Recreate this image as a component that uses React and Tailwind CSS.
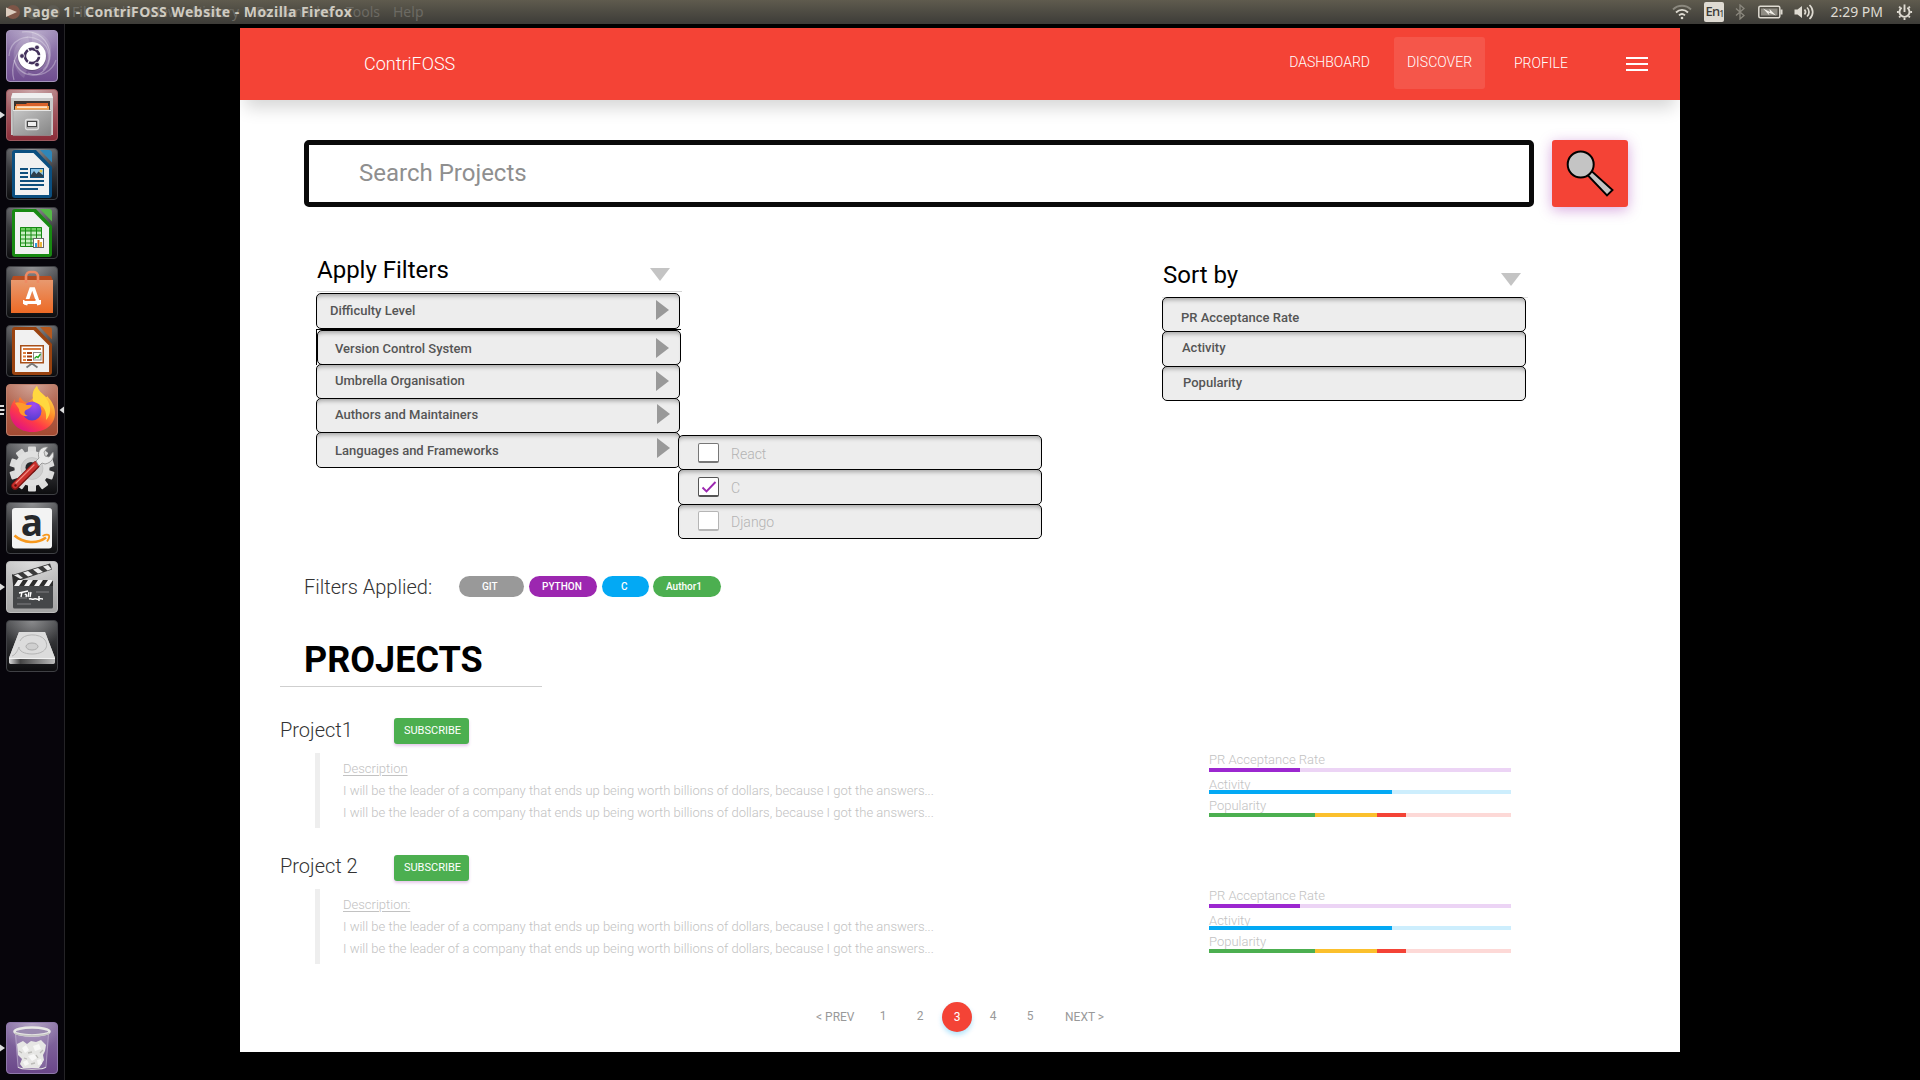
import React from "react";

/* ---------- launcher icons ---------- */

function Tile({ id, from, to, stroke, children }) {
  return (
    <svg viewBox="0 0 52 52" className="block size-[52px]">
      <defs>
        <linearGradient id={id} x1="0" y1="0" x2="0" y2="1">
          <stop offset="0" stopColor={from} />
          <stop offset="1" stopColor={to} />
        </linearGradient>
        <radialGradient id={id + "-glow"} cx="0.5" cy="0" r="0.6">
          <stop offset="0" stopColor="#fff" stopOpacity="0.35" />
          <stop offset="1" stopColor="#fff" stopOpacity="0" />
        </radialGradient>
      </defs>
      <rect x="0.5" y="0.5" width="51" height="51" rx="3.5" fill={`url(#${id})`} stroke={stroke} />
      <rect x="1" y="1" width="50" height="50" rx="3" fill={`url(#${id}-glow)`} />
      {children}
    </svg>
  );
}

function UbuntuIcon() {
  return (
    <Tile id="ubuntu" from="#9a86b4" to="#6f4d8f" stroke="#a796bd">
      <g fill="none" stroke="#fff">
        <path d="M3 26C4 10 20 3 33 10c12 7 13 22 4 30" strokeOpacity=".3" strokeWidth="1.2" />
        <path d="M8 50C4 36 10 20 22 15" strokeOpacity=".35" strokeWidth="1.2" />
        <path d="M16 2c16-2 27 8 28 23 0 12-8 21-19 20-9-1-14-6-17-15" strokeOpacity=".35" strokeWidth="1.2" />
        <path d="M50 30C46 42 34 48 22 43" strokeOpacity=".3" strokeWidth="1.2" />
      </g>
      <path d="M26 2c16 1 22 13 18 26-3 10-10 14-18 12z" fill="#fff" opacity=".13" />
      <path d="M8 30c-2-12 4-20 14-24L26 26 18 48C12 44 9 38 8 30z" fill="#fff" opacity=".13" />
      <circle cx="26" cy="26.5" r="14.5" fill="#000" opacity=".2" />
      <circle cx="26" cy="26" r="14" fill="#fff" />
      <circle cx="26" cy="26" r="7" fill="none" stroke="#43315c" strokeWidth="2.8" />
      <path d="M26 26L35 26M26 26L21.5 18.2M26 26L21.5 33.8" stroke="#fff" strokeWidth="1.3" />
      <circle cx="26" cy="26" r="5.6" fill="#fff" />
      {[[16, 26], [31, 17.4], [31, 34.6]].map(([x, y]) => (
        <circle key={y} cx={x} cy={y} r="2.4" fill="#43315c" stroke="#fff" strokeWidth=".8" />
      ))}
    </Tile>
  );
}

function FilesIcon() {
  return (
    <Tile id="files" from="#b0787c" to="#8b2c38" stroke="#9e5a60">
      <defs>
        <linearGradient id="drawer" x1="0" y1="0" x2="1" y2="1">
          <stop offset="0" stopColor="#c6c6c6" />
          <stop offset="1" stopColor="#858585" />
        </linearGradient>
      </defs>
      <path d="M6.500 4h39l1.500 5v37H5V9z" fill="#c9c9c9" />
      <path d="M6.500 4h39l1.500 5H5z" fill="#efefef" />
      <rect x="8" y="12" width="36" height="10" fill="#3a3330" />
      <path d="M10 15h10l1-1h21v7H10z" fill="#d9622b" />
      <path d="M9 17h34v4H9z" fill="#f5a04c" />
      <path d="M11 17.500h30v1.200H11z" fill="#fff" />
      <path d="M7 21h38v25.500H7z" fill="url(#drawer)" stroke="#9b9b9b" strokeWidth=".6" />
      <path d="M7 21.500h38" stroke="#e6e6e6" />
      <rect x="19.500" y="30.500" width="13" height="10" rx="2" fill="#a9a9a9" stroke="#dedede" strokeWidth="1.300" />
      <rect x="21.500" y="32.500" width="9" height="5" fill="#eee" stroke="#444" strokeWidth="1" />
    </Tile>
  );
}

function OfficeIcon({ id, color, light, children }) {
  return (
    <Tile id={id} from="#55565a" to="#0c0c0e" stroke="#3f4044">
      <path d="M9 2h21l16 17v28a3 3 0 0 1-3 3H9a3 3 0 0 1-3-3V5a3 3 0 0 1 3-3z" fill={color} />
      <path d="M9 5h18.500L43 20.500V47H9z" fill="#f1f1f1" />
      <path d="M34 2h9a3 3 0 0 1 3 3v9.500z" fill={light} />
      {children}
    </Tile>
  );
}

function WriterIcon() {
  return (
    <OfficeIcon id="writer" color="#0b4f80" light="#2f86b8">
      <g fill="#0f4f7d">
        <rect x="14" y="20" width="8" height="2" />
        <rect x="14" y="24" width="8" height="2" />
        <rect x="14" y="28" width="8" height="2" />
        <rect x="14" y="32" width="24" height="2" />
        <rect x="14" y="36" width="24" height="2" />
        <rect x="14" y="40" width="18" height="2" />
      </g>
      <rect x="24.500" y="20.500" width="13" height="9" fill="#8cc4e8" stroke="#0f4f7d" />
      <path d="M25 29v-2l3-4 2.500 3 2-2.500L37 27v2z" fill="#2c3e4c" />
      <circle cx="35" cy="23" r="1.500" fill="#e8c547" />
    </OfficeIcon>
  );
}

function CalcIcon() {
  return (
    <OfficeIcon id="calc" color="#188a12" light="#55b848">
      <rect x="14" y="20" width="22" height="20" fill="#c9efc2" />
      <rect x="14" y="20" width="22" height="4" fill="#6fcf63" />
      <path d="M14.500 20.500h21v19h-21zM14 24h22M14 28h22M14 32h22M14 36h22M19.500 20v20M25 20v20M30.500 20v20" fill="none" stroke="#168a12" />
      <rect x="27.500" y="31.500" width="10" height="9" fill="#fff" stroke="#666" />
      <path d="M29 36h2v4h-2z" fill="#2e9be0" />
      <path d="M31.500 33h2v7h-2z" fill="#e06a1c" />
      <path d="M34 35h2v5h-2z" fill="#e9b63a" />
    </OfficeIcon>
  );
}

function ImpressIcon() {
  return (
    <OfficeIcon id="impress" color="#9a4310" light="#b5591f">
      <rect x="14.750" y="20.750" width="22.500" height="17" fill="#fff" stroke="#a8501a" strokeWidth="1.500" />
      <rect x="17" y="23" width="18" height="2" fill="#d77a3d" />
      <path d="M17 27h3v2h-3zM17 30.500h3v2h-3zM17 34h3v2h-3z" fill="#e07f3c" />
      <path d="M21 27h5v2h-5zM21 30.500h5v2h-5zM21 34h5v2h-5z" fill="#a03f12" />
      <rect x="27.500" y="27.500" width="7.500" height="7.500" fill="#fff" stroke="#888" />
      <path d="M28.500 33.500l2-2 1.500 1 2.500-3.500" fill="none" stroke="#1ca51c" strokeWidth="1.300" />
      <path d="M26 38v2M26 38.500l-5.500 4M26 38.500l5.500 4" stroke="#777" strokeWidth="1.800" />
    </OfficeIcon>
  );
}

function SoftwareIcon() {
  return (
    <Tile id="software" from="#57585c" to="#0c0c0e" stroke="#3f4044">
      <defs>
        <linearGradient id="bag" x1="0" y1="0" x2="0" y2="1">
          <stop offset="0" stopColor="#e8996f" />
          <stop offset="1" stopColor="#ed6a25" />
        </linearGradient>
      </defs>
      <path d="M7 10h38l2 5H5z" fill="#b54b1f" />
      <path d="M5 14h42v33H5z" fill="url(#bag)" />
      <path d="M20 17v-6c0-3 2-5 4-5h4c2 0 4 2 4 5v6" fill="none" stroke="#ef8a63" strokeWidth="2.600" />
      <path d="M19.500 39L25 23h2.500L33 39" fill="none" stroke="#fff" strokeWidth="3.600" />
      <path d="M17 34h18v4H17z" fill="#fff" />
      <path d="M18.500 34h11" stroke="#ee6a25" strokeWidth="1.800" />
    </Tile>
  );
}

function FirefoxIcon() {
  return (
    <Tile id="firefox" from="#b9735f" to="#a34a32" stroke="#bd7f6c">
      <defs>
        <linearGradient id="flame" x1="0.8" y1="0.1" x2="0.25" y2="0.95">
          <stop offset="0" stopColor="#ffe14a" />
          <stop offset=".4" stopColor="#ff8a2a" />
          <stop offset=".7" stopColor="#ff3b47" />
          <stop offset="1" stopColor="#e3157e" />
        </linearGradient>
        <radialGradient id="globe" cx="0.6" cy="0.2" r="0.9">
          <stop offset="0" stopColor="#a34df0" />
          <stop offset="1" stopColor="#4b3bd0" />
        </radialGradient>
      </defs>
      <path d="M31 2c1 5 5 7 9 11 1 0 1 0 1-1 5 5 8 11 8 17 0 12-10 19-23 19S4 39 4 28c0-5 2-9 5-13 0 2 0 3 1 4 1-1 2-1 3-1-1-2 0-3 1-5 2 3 4 5 7 6 2-2 5-3 6-5-1-5 1-9 4-12z" fill="url(#flame)" />
      <circle cx="26" cy="27" r="9.500" fill="url(#globe)" />
      <path d="M31 2c1 5 6 8 9 12 6 8 5 17 0 22 1-9-2-14-9-17-4-1-5-3-4-5-1-5 1-9 4-12z" fill="#ffd83f" />
      <path d="M9 19c4-1 9 0 12 2h5c-1 3-4 4-6 5-3 2-1 5 2 6-6 1-9-3-9-7z" fill="#ff9a2c" />
    </Tile>
  );
}

function SettingsIcon() {
  const teeth = [0, 36, 72, 108, 144, 180, 216, 252, 288, 324];
  return (
    <Tile id="settings" from="#57585c" to="#0c0c0e" stroke="#3f4044">
      {teeth.map((a) => (
        <rect key={a} x="22" y="3.500" width="8" height="10" rx="1" fill="#dcdcdc" transform={`rotate(${a} 26 26)`} />
      ))}
      <circle cx="26" cy="25.500" r="17.500" fill="#e0e0e0" />
      <circle cx="26" cy="25.500" r="11" fill="#cfcfcf" stroke="#bbb" strokeWidth=".6" />
      <circle cx="25" cy="24.500" r="5.500" fill="#26272a" />
      <path d="M9 43L30 22" stroke="#7b1513" strokeWidth="7.500" strokeLinecap="round" />
      <path d="M9 42.500L30 21.500" stroke="#c92f2b" strokeWidth="5.500" strokeLinecap="round" />
      <path d="M10 40L28 22" stroke="#f08a80" strokeWidth="1.200" strokeLinecap="round" />
      <path d="M30 18l3-3c-2-5 1-10 6-11h3l-4 5 1 4 4 1 4-5c2 6-2 11-8 12l-3-1-3 3z" fill="#e9e9e9" stroke="#8b8b8b" strokeWidth=".8" />
      <circle cx="9.500" cy="42.500" r="1.200" fill="#5c0e0d" />
    </Tile>
  );
}

function AmazonIcon() {
  return (
    <Tile id="amazon" from="#57585c" to="#0c0c0e" stroke="#3f4044">
      <rect x="6" y="6" width="40" height="40.500" rx="3" fill="#f3f3f3" />
      <text x="26" y="33.500" textAnchor="middle" fontFamily="Open Sans" fontWeight="700" fontSize="37" fill="#26282b">a</text>
      <path d="M8.500 33.500c9 8 23 8.500 31.500 2" fill="none" stroke="#f7981d" strokeWidth="2.600" />
      <path d="M36.500 34c3-1.500 5.500-1.500 6.500-.5.500 1.500-.5 4-2 6" fill="none" stroke="#f7981d" strokeWidth="1.800" />
    </Tile>
  );
}

function VideoIcon() {
  return (
    <Tile id="video" from="#c9c9c9" to="#a3a3a3" stroke="#bdbdbd">
      <path d="M6 14L44 2.500l2 6L9 21z" fill="#3a3a3a" />
      <g fill="#ececec">
        <path d="M7 14.500l5-1.500 5 4-5 1.500z" />
        <path d="M17 11.500l5-1.500 5 4-5 1.500z" />
        <path d="M27 8.500l5-1.500 5 4-5 1.500z" />
        <path d="M37 5.500l5-1.500 3.500 4-4 1.500z" />
      </g>
      <path d="M6 13l10 6-9 4z" fill="#2c2c2c" />
      <rect x="7" y="19" width="40" height="28.500" rx="1.500" fill="#454749" />
      <rect x="7" y="19" width="40" height="6" fill="#2d2d2d" />
      <g fill="#f2f2f2">
        <path d="M12 19h5l-4 6H8zM22 19h5l-4 6h-5zM32 19h5l-4 6h-5zM42 19h5l-4 6h-5z" />
      </g>
      <path d="M13 32l9-2M16 31l-1 5M19 34c1-2 2 0 1 2M23 31l-1 5M25 31l-1 5M23 38c2-1 3 1 5 0s3 1 5 0 3 0 4 0M33 35v5" fill="none" stroke="#fff" strokeWidth="1.400" />
      <path d="M11 37h10M30 31h13M11 43h14" stroke="#8f9192" strokeWidth=".8" />
    </Tile>
  );
}

function DiskIcon() {
  return (
    <Tile id="disk" from="#4c4d50" to="#0c0c0e" stroke="#3f4044">
      <defs>
        <linearGradient id="disk-edge" x1="0" y1="0" x2="1" y2="0">
          <stop offset="0" stopColor="#ddd" />
          <stop offset=".25" stopColor="#444" />
          <stop offset="1" stopColor="#bbb" />
        </linearGradient>
      </defs>
      <path d="M13 12h26l10 26v4H3v-4z" fill="#d2d2d2" />
      <path d="M13 12h26l10 26H3z" fill="#dcdcdc" />
      <path d="M14 21c3-8 20-8 25-1 5 8-2 14-13 14-8 0-13-3-13-7-2 5-4 8-7 9" fill="none" stroke="#b5b5b5" />
      <ellipse cx="26" cy="26.500" rx="6" ry="3.500" fill="#cfcfcf" stroke="#aaa" />
      <path d="M3 38h46v4.500a2 2 0 0 1-2 1.500H5a2 2 0 0 1-2-1.500z" fill="url(#disk-edge)" />
      <path d="M3 38.500h46" stroke="#f2f2f2" />
    </Tile>
  );
}

function TrashIcon() {
  return (
    <Tile id="trash" from="#8b74a6" to="#6a4689" stroke="#8f79ab">
      <path d="M9 10l3 35c0 3 28 3 28 0l3-35z" fill="#b3a2c6" opacity=".3" />
      <path d="M9.500 12l2.500 33M42.500 12L40 45" stroke="#c9bcd8" strokeOpacity=".6" />
      <path d="M11 22l6-3 4 3 4-3 5 1 5-2 5 5-1 6-2 4 1 5-3 5-2 3H17l-3-4 2-5-4-4z" fill="#e6e6e4" />
      <path d="M16 26l4-3 3 5-4 3zM27 24l6-2 2 5-6 2zM22 34l6-2 3 4-5 3zM17 40l4-2 2 4-4 2zM31 38l4-1 1 5-4 1z" fill="#f7f7f6" />
      <path d="M13 29l3 2M22 31l4-1M34 31l3-3M18 36l3 1M30 33l2 3M25 42l4-1" stroke="#bcbcb8" strokeWidth="1.300" />
      <ellipse cx="26" cy="9.500" rx="17.500" ry="4" fill="#9b8bb0" stroke="#e8e8e6" strokeWidth="2.600" />
      <path d="M8.500 11c4 3.500 31 3.500 35 0" fill="none" stroke="#c4c4c2" strokeWidth="1.500" />
      <path d="M12 45c2 3 26 3 28 0" fill="none" stroke="#e8e8e6" strokeWidth="1.200" />
    </Tile>
  );
}

const launcher = [
  { key: "ubuntu", Icon: UbuntuIcon },
  { key: "files", Icon: FilesIcon, mark: "one" },
  { key: "writer", Icon: WriterIcon },
  { key: "calc", Icon: CalcIcon },
  { key: "software", Icon: SoftwareIcon },
  { key: "impress", Icon: ImpressIcon },
  { key: "firefox", Icon: FirefoxIcon, mark: "many" },
  { key: "settings", Icon: SettingsIcon },
  { key: "amazon", Icon: AmazonIcon },
  { key: "video", Icon: VideoIcon, mark: "one" },
  { key: "disk", Icon: DiskIcon },
];

function LauncherItem({ Icon, mark }) {
  return (
    <div className="flex items-center">
      <svg viewBox="0 0 6 12" className="h-3 w-1.5 shrink-0">
        {mark === "one" && <path d="M0 2.500L5 6 0 9.500z" fill="#dcdcdc" />}
        {mark === "many" && <path d="M0 2h4M0 6h4.500M0 10h4" stroke="#dcdcdc" strokeWidth="2" />}
      </svg>
      <Icon />
      {mark === "many" && (
        <svg viewBox="0 0 6 12" className="h-3 w-1.5 shrink-0">
          <path d="M6 2.500L1.500 6 6 9.500z" fill="#dcdcdc" />
        </svg>
      )}
    </div>
  );
}

function Launcher() {
  return (
    <aside className="flex w-[65px] shrink-0 flex-col border-r border-[#242326] bg-[#07050b] py-1.5">
      <div className="flex flex-col gap-[7px]">
        {launcher.map(({ key, Icon, mark }) => (
          <LauncherItem key={key} Icon={Icon} mark={mark} />
        ))}
      </div>
      <div className="mt-auto">
        <LauncherItem Icon={TrashIcon} mark="one" />
      </div>
    </aside>
  );
}

/* ---------- top panel ---------- */

function TopPanel() {
  return (
    <div className="relative flex h-6 shrink-0 items-center overflow-hidden bg-linear-to-b from-[#5f5b4e] to-[#3d3c38] font-['Noto_Sans',sans-serif]">
      <div className="absolute inset-0 flex items-center whitespace-nowrap pb-px pl-1.5 text-[14px] text-[#6c6a63]">
        <span className="mr-1.5 size-3.5 rounded-full bg-[#7d5547]" />
        <span className="mr-1.5 size-3.5 rounded-full bg-[#5d5b53]" />
        <span className="size-3.5 rounded-full bg-[#5d5b53]" />
        <span className="ml-3 w-[37px]">File</span>
        <span className="w-[39px]">Edit</span>
        <span className="w-[44px]">View</span>
        <span className="w-[64px]">History</span>
        <span className="w-[90px]">Bookmarks</span>
        <span className="w-[47px]">Tools</span>
        <span>Help</span>
      </div>
      <svg viewBox="0 0 12 12" className="relative ml-1.5 h-3 w-3">
        <path d="M0 1.500L11 6 0 11z" fill="#dccdbf" />
      </svg>
      <span className="relative ml-[5px] whitespace-nowrap pb-[2px] text-[14px] font-bold tracking-[0.47px] text-[#cfcbc1]">
        Page 1 - ContriFOSS Website - Mozilla Firefox
      </span>
      <div className="relative ml-auto flex items-center pr-[7px] text-[#dfdbd2]">
        <svg viewBox="0 0 20 16" className="mr-3 h-4 w-5" fill="none" stroke="#dfdbd2" strokeWidth="1.800">
          <path d="M1 5.500c5-5 13-5 18 0" stroke="#8b887e" />
          <path d="M4 8.500c3.500-3.500 8.500-3.500 12 0" />
          <path d="M7 11.300c2-1.800 4-1.800 6 0" />
          <circle cx="10" cy="14" r="1.300" fill="#dfdbd2" stroke="none" />
        </svg>
        <span className="mr-[11px] flex h-5 w-5 items-center justify-center rounded-xs bg-[#dfdbd2] text-[13px] font-medium tracking-tighter text-[#3c3b37]">
          En<sub className="text-[8px]">1</sub>
        </span>
        <svg viewBox="0 0 10 16" className="mr-[13px] h-4 w-[10px]" fill="none" stroke="#8b887e" strokeWidth="1.300">
          <path d="M1 4.500l8 7L5 15V1l4 3.500-8 7" />
        </svg>
        <svg viewBox="0 0 25 14" className="mr-[11px] h-3.5 w-[25px]">
          <rect x="0.800" y="1.300" width="21" height="11.500" rx="1.500" fill="none" stroke="#dfdbd2" strokeWidth="1.500" />
          <rect x="22.500" y="4.500" width="2" height="5" fill="#dfdbd2" />
          <rect x="3" y="3.500" width="16.500" height="7" fill="#8f8c83" />
          <path d="M5 3.500l7 3.500-.5-3 6.500 6.500-7.500-3 1 3z" fill="#f2efe8" />
        </svg>
        <svg viewBox="0 0 20 18" className="mr-4 h-[18px] w-5" fill="none" stroke="#dfdbd2" strokeWidth="1.700">
          <path d="M0.500 6.500h3L8 3v12l-4.500-3.500h-3z" fill="#dfdbd2" stroke="none" />
          <path d="M10.500 6.500c1.300 1.500 1.300 3.500 0 5M13 4.500c2.700 2.500 2.700 6.500 0 9M15.500 2c4.300 4 4.300 10 0 14" />
        </svg>
        <span className="mr-[13px] whitespace-nowrap pb-px text-[14px] leading-6">2:29 PM</span>
        <svg viewBox="0 0 18 18" className="h-[18px] w-[17px]" fill="none" stroke="#dfdbd2">
          <path d="M6 4.500a5.300 5.300 0 1 0 6 0" strokeWidth="2" />
          <path d="M9 1v8" strokeWidth="2" />
          <path d="M1 9h2M15 9h2M3.300 3.300l1.400 1.400M14.700 3.300l-1.400 1.400M3.300 14.700l1.400-1.400M14.700 14.700l-1.400-1.400M9 15v2.500" strokeWidth="2" />
        </svg>
      </div>
    </div>
  );
}

/* ---------- web page ---------- */

function Header() {
  return (
    <header className="flex h-[72px] shrink-0 items-center bg-[#f44336] text-[14px] leading-5 font-light text-white shadow-[0_13px_16px_-5px_rgba(0,0,0,0.16)]">
      <h1 className="ml-[124px] text-[18px] leading-6">ContriFOSS</h1>
      <nav className="-mt-[2px] ml-auto flex h-[52px] items-center">
        <a className="mr-[24px] pb-[3px]">DASHBOARD</a>
        <a className="mr-[29px] flex h-[52px] w-[91px] items-center justify-center rounded-[3px] bg-white/10 pb-[3px]">DISCOVER</a>
        <a className="w-[55px]">PROFILE</a>
      </nav>
      <div className="mr-8 ml-[57px] flex w-[22px] flex-col gap-1">
        <span className="h-0.5 bg-white" />
        <span className="h-0.5 bg-white" />
        <span className="h-0.5 bg-white" />
      </div>
    </header>
  );
}

function SearchRow() {
  return (
    <div className="mt-10 flex h-[67px] shrink-0 pl-16">
      <div className="flex w-[1230px] items-center rounded-[5px] border-[5px] border-[#0a0a0a] pb-px pl-[50px] text-[24px] leading-8 text-[#8f8f8f]">
        Search Projects
      </div>
      <button className="ml-[18px] flex w-[76px] rounded-[3px] bg-[#f44336] shadow-[0_3px_14px_rgba(156,39,176,0.4)]">
        <svg viewBox="0 0 76 67" className="h-[67px] w-[76px]" fill="#c4c4c4" stroke="#000" strokeWidth="2">
          <path d="M35.500 35l4-4L60.500 50 55 55.500z" strokeWidth="1.900" />
          <circle cx="28.700" cy="24.500" r="13" />
        </svg>
      </button>
    </div>
  );
}

const box =
  "flex items-start rounded-[5px] border border-black bg-[#ededed] shadow-[inset_0_5px_4px_-3px_rgba(0,0,0,0.3)]";

function Arrow({ className }) {
  return (
    <svg viewBox="0 0 13 20" className={`ml-auto h-5 w-[13px] shrink-0 ${className}`}>
      <path d="M0 0L13 10 0 20z" fill="#999" />
    </svg>
  );
}

function ListHeading({ title, className, lineClass, triangleClass }) {
  return (
    <div className={`flex items-start justify-between ${className}`}>
      <h2 className={`text-[24px] leading-8 text-black ${lineClass}`}>{title}</h2>
      <svg viewBox="0 0 20 13" className={`h-[13px] w-5 ${triangleClass}`}>
        <path d="M0 0h20L10 13z" fill="#c4c4c4" />
      </svg>
    </div>
  );
}

const filters = [
  { label: "Difficulty Level", row: "h-9 w-[364px]", text: "mt-[9px] ml-[13px]", arrow: "mt-[5.5px] mr-[10px]" },
  { label: "Version Control System", text: "mt-[10px] ml-[17px]", arrow: "mt-[6.5px] mr-[11px]", framed: true },
  { label: "Umbrella Organisation", row: "-mt-px h-[35px] w-[364px]", text: "mt-2 ml-[18px]", arrow: "mt-[6px] mr-[10px]" },
  { label: "Authors and Maintainers", row: "-mt-px h-[35px] w-[364px]", text: "mt-2 ml-[18px]", arrow: "mt-[5px] mr-[9.5px]" },
  { label: "Languages and Frameworks", row: "-mt-px h-9 w-[364px]", text: "mt-[10px] ml-[18px]", arrow: "mt-[5px] mr-[9px]" },
];

const languages = [
  { label: "React", row: "h-[35px]", text: "mt-[10px]", check: "mt-[7px] border-[#777]" },
  { label: "C", row: "-mt-px h-9", text: "mt-[10px]", check: "mt-[7px] border-[#555]", checked: true },
  { label: "Django", row: "-mt-px h-[35px]", text: "mt-[9px]", check: "mt-[6px] border-[#b5b5b5]" },
];

const sorts = [
  { label: "PR Acceptance Rate", row: "h-[35px]", text: "mt-3 ml-[18px]" },
  { label: "Activity", row: "-mt-px h-9", text: "mt-2 ml-[19px]" },
  { label: "Popularity", row: "-mt-px h-[35px]", text: "mt-2 ml-5" },
];

function FilterArea() {
  return (
    <div className="flex h-[332px] shrink-0 items-start pl-[76px] text-[13px] leading-4 font-medium text-[#555]">
      <section className="w-[366px]">
        <ListHeading
          title="Apply Filters"
          className="ml-px h-[85px] border-b border-[#d4d4d4]"
          lineClass="mt-[47px] font-normal"
          triangleClass="mt-[61px] mr-[12.5px]"
        />
        <div className="mt-px">
          {filters.map((f) =>
            f.framed ? (
              <div key={f.label} className="w-[365px] border-t border-l border-black">
                <div className={`${box} h-[35px] w-[364px]`}>
                  <span className={f.text}>{f.label}</span>
                  <Arrow className={f.arrow} />
                </div>
              </div>
            ) : (
              <div key={f.label} className={`${box} ${f.row}`}>
                <span className={f.text}>{f.label}</span>
                <Arrow className={f.arrow} />
              </div>
            )
          )}
        </div>
      </section>
      <section className="mt-[228px] -ml-1 w-[364px] text-[14px] font-light text-[#b3b3b3]">
        {languages.map((l) => (
          <div key={l.label} className={`${box} ${l.row}`}>
            <span className={`ml-[19px] flex h-[20px] w-[21px] items-center justify-center rounded-[2px] border border-b-2 bg-white ${l.check}`}>
              {l.checked && (
                <svg viewBox="0 0 16 12" className="h-3 w-4" fill="none" stroke="#9c27b0" strokeWidth="1.900">
                  <path d="M1.500 6.500L5.500 10.500 14.500 1" />
                </svg>
              )}
            </span>
            <span className={`ml-[12px] ${l.text}`}>{l.label}</span>
          </div>
        ))}
      </section>
      <section className="ml-[120px] w-[366px]">
        <ListHeading
          title="Sort by"
          className="ml-px h-[90px]"
          lineClass="mt-[52px] font-normal"
          triangleClass="mt-[66px] mr-[7px]"
        />
        <div className="border-t border-[#e2e2e2]">
          <div className="-mt-px w-[364px]">
            {sorts.map((s) => (
              <div key={s.label} className={`${box} ${s.row}`}>
                <span className={s.text}>{s.label}</span>
              </div>
            ))}
          </div>
        </div>
      </section>
    </div>
  );
}

const pills = [
  { label: "GIT", cls: "ml-[26px] w-[65px] bg-[#999] pl-[23px]" },
  { label: "PYTHON", cls: "ml-[5px] w-[68px] bg-[#9c27b0] pl-[13px]" },
  { label: "C", cls: "ml-[5px] w-[47px] bg-[#03a9f4] pl-[19px]" },
  { label: "Author1", cls: "ml-[4px] w-[68px] bg-[#4caf50] pl-[13px]" },
];

function AppliedFilters() {
  return (
    <div className="mt-[37px] flex h-[21px] shrink-0 items-center pl-16">
      <span className="w-[129px] whitespace-nowrap text-[20px] leading-6 font-light text-[#333]">Filters Applied:</span>
      {pills.map((p) => (
        <span key={p.label} className={`flex h-[21px] items-center rounded-full text-[10px] leading-4 font-medium text-white ${p.cls}`}>
          {p.label}
        </span>
      ))}
    </div>
  );
}

function Bar({ className = "", segments }) {
  return (
    <div className={`relative flex h-1 ${className}`}>
      {segments.map(([color, width]) => (
        <span key={color} className="h-1" style={{ width, backgroundColor: color }} />
      ))}
    </div>
  );
}

const sentence =
  "I will be the leader of a company that ends up being worth billions of dollars, because I got the answers...";

function Project({ name, description, className, titleClass, bodyClass }) {
  return (
    <article className={`flex shrink-0 flex-col ${className}`}>
      <div className="flex h-[26px] items-center pl-10">
        <h3 className={`w-[114px] text-[20px] leading-6 font-light text-[#333] ${titleClass}`}>{name}</h3>
        <button className="flex h-[26px] w-[75px] items-center justify-center rounded-[3px] bg-[#4caf50] pl-[2px] text-[11px] leading-4 text-white shadow-[0_2px_3px_rgba(156,39,176,0.25)]">
          SUBSCRIBE
        </button>
      </div>
      <div className={`flex h-[75px] pl-[75px] text-[13px] font-light text-[#c2c2c2] ${bodyClass}`}>
        <div className="w-[894px] border-l-5 border-[#eee] pt-[5px] pl-[23px] leading-[22px]">
          <p className="underline underline-offset-2">{description}</p>
          <p>{sentence}</p>
          <p>{sentence}</p>
        </div>
        <div className="-mt-px w-[302px] leading-4">
          <p>PR Acceptance Rate</p>
          <Bar segments={[["#9c27d0", 91], ["#ecd4f5", 211]]} />
          <p className="mt-[5px]">Activity</p>
          <Bar className="-mt-[3px]" segments={[["#03a9f4", 183], ["#cdeefd", 119]]} />
          <p className="mt-1">Popularity</p>
          <Bar
            className="-mt-px"
            segments={[["#4caf50", 106], ["#fbc02d", 62], ["#f44336", 29], ["#fdd9d7", 105]]}
          />
        </div>
      </div>
    </article>
  );
}

function Pagination() {
  return (
    <div className="mt-[38px] flex h-[30px] shrink-0 items-center pl-[576px] text-[12px] leading-4 text-[#999]">
      <span className="w-[48.5px] whitespace-nowrap">&lt; PREV</span>
      <span className="w-[37px] pb-[2px] text-center">1</span>
      <span className="w-[37px] pb-[2px] text-center">2</span>
      <span className="mx-[3.5px] flex size-[30px] items-center justify-center rounded-full bg-[#f44336] text-white shadow-[0_3px_5px_rgba(3,169,244,0.3)]">3</span>
      <span className="-ml-px w-[37px] pb-[2px] text-center">4</span>
      <span className="w-[37px] pb-[2px] text-center">5</span>
      <span className="ml-[16.5px] whitespace-nowrap">NEXT &gt;</span>
    </div>
  );
}

export default function App() {
  return (
    <div className="flex h-[1080px] w-[1920px] flex-col overflow-hidden bg-black">
      <TopPanel />
      <div className="flex min-h-0 flex-1">
        <Launcher />
        <main className="mt-1 ml-[175px] flex h-[1024px] w-[1440px] shrink-0 flex-col overflow-hidden bg-white font-[Roboto,sans-serif]">
          <Header />
          <SearchRow />
          <FilterArea />
          <AppliedFilters />
          <h2 className="ml-10 h-[90px] w-[262px] shrink-0 border-b border-[#cfcfcf] pt-[43px] pl-6 text-[36px] leading-10 font-bold text-black">
            PROJECTS
          </h2>
          <Project name="Project1" description="Description" className="mt-[31px]" titleClass="pb-[2px]" bodyClass="mt-[9px]" />
          <Project name="Project 2" description="Description:" className="mt-[27px]" titleClass="pb-1" bodyClass="mt-[8px]" />
          <Pagination />
        </main>
      </div>
    </div>
  );
}
